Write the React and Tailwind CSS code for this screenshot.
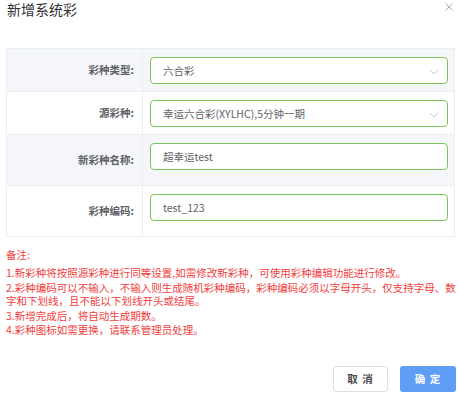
const font = { fontFamily: '"Noto Sans CJK SC", "Noto Sans", sans-serif' }

function Chevron() {
  return (
    <svg width="10" height="6" viewBox="0 0 10 6" className="absolute right-[8px] top-[11px]">
      <path d="M1 1 L5 5 L9 1" fill="none" stroke="#c6cad2" strokeWidth="1" />
    </svg>
  )
}

function Field({ value, select }) {
  return (
    <div className="relative w-[298px] h-[27px] border border-[#7dc35b] rounded-[4px] bg-white flex items-center pl-[12px] text-[10.5px] text-[#606266]">
      {value}
      {select && <Chevron />}
    </div>
  )
}

function Row({ label, value, select, gray, tall, last }) {
  return (
    <div className={`flex ${last ? "" : "border-b border-[#ebeef5]"} ${gray ? "bg-[#f5f6f9]" : "bg-white"}`}>
      <div className="w-[136px] border-r border-[#ebeef5] flex items-center justify-end pr-[8px] text-[10.5px] font-bold text-[#5d5f66]">
        {label}
      </div>
      <div className={`flex-1 pl-[7px] pt-[8px] ${tall ? "pb-[15px]" : "pb-[7px]"}`}>
        <Field value={value} select={select} />
      </div>
    </div>
  )
}

const notes = [
  "1.新彩种将按照源彩种进行同等设置,如需修改新彩种，可使用彩种编辑功能进行修改。",
  "2.彩种编码可以不输入，不输入则生成随机彩种编码，彩种编码必须以字母开头，仅支持字母、数字和下划线，且不能以下划线开头或结尾。",
  "3.新增完成后，将自动生成期数。",
  "4.彩种图标如需更换，请联系管理员处理。",
]

export default function App() {
  return (
    <div className="w-[459px] h-[395px] bg-white relative overflow-hidden" style={font}>
      <div className="flex items-start justify-between pl-[7px] pr-[6px]">
        <div className="text-[14px] leading-[18px] text-[#303133]">新增系统彩</div>
        <svg width="8" height="8" viewBox="0 0 8 8" className="mt-[3px]">
          <path d="M0.5 0.5 L7.5 7.5 M7.5 0.5 L0.5 7.5" stroke="#a8abb2" strokeWidth="1" />
        </svg>
      </div>

      <div className="mt-[30px] ml-[6px] w-[449px] border border-[#ebeef5]">
        <Row label="彩种类型:" value="六合彩" select gray />
        <Row label="源彩种:" value="幸运六合彩(XYLHC),5分钟一期" select />
        <Row label="新彩种名称:" value="超幸运test" gray tall />
        <Row label="彩种编码:" value="test_123" tall last />
      </div>

      <div className="mt-[11px] pl-[6px] w-[456px] text-[10.5px] text-[#f23d3d]">
        <p className="leading-[14px]">备注:</p>
        <div className="mt-[4px] flex flex-col gap-[1px]">
          {notes.map((n) => (
            <p key={n} className="leading-[13.5px]">{n}</p>
          ))}
        </div>
      </div>

      <div className="absolute bottom-[3px] right-[3px] flex gap-[12px]">
        <button className="w-[55px] h-[26px] border border-[#dcdfe6] rounded-[3px] bg-white text-[10.5px] font-semibold tracking-[1px] text-[#4a4a4a]">
          取 消
        </button>
        <button className="w-[56px] h-[26px] rounded-[3px] bg-[#5e9ef7] text-[10.5px] font-semibold tracking-[1px] text-white">
          确 定
        </button>
      </div>
    </div>
  )
}
